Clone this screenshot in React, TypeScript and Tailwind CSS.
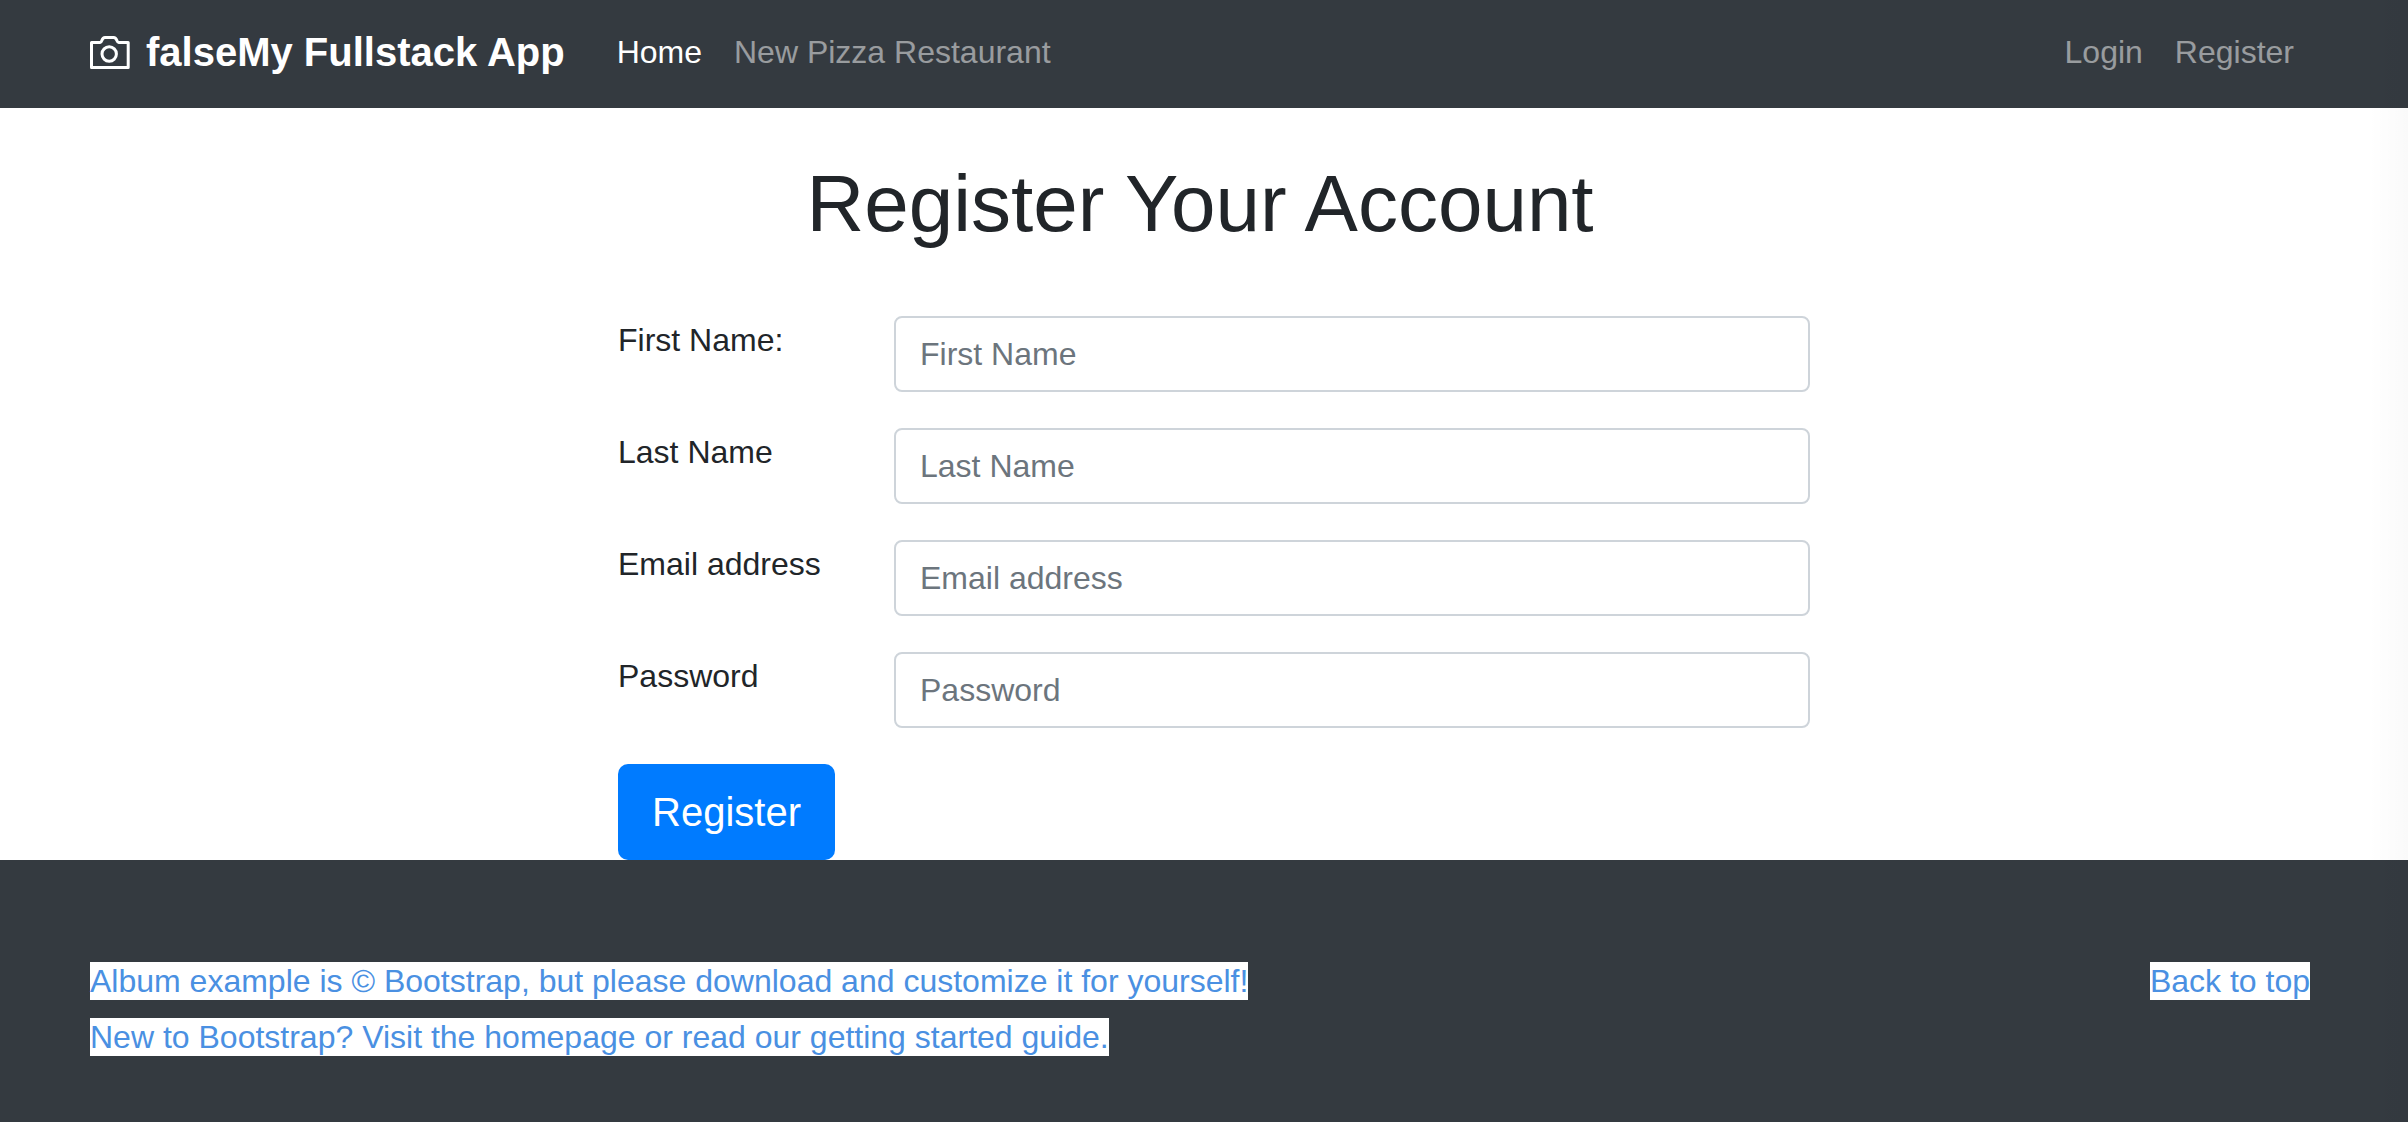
const fields = [
  { id: "firstName", label: "First Name:", placeholder: "First Name", type: "text" },
  { id: "lastName", label: "Last Name", placeholder: "Last Name", type: "text" },
  { id: "email", label: "Email address", placeholder: "Email address", type: "email" },
  { id: "password", label: "Password", placeholder: "Password", type: "password" },
];

function CameraIcon() {
  return (
    <svg
      className="size-10 shrink-0"
      viewBox="0 0 40 40"
      fill="none"
      stroke="currentColor"
      strokeWidth="3"
      aria-hidden="true"
    >
      <path d="M1.5 10.5H10.2C12.4 10.5 11.2 5.6 15 5.6H23.6C27.4 5.6 26.4 10.5 28.6 10.5H38.2V35.4H1.5Z" strokeLinejoin="round" />
      <circle cx="19.2" cy="22" r="7.2" />
    </svg>
  );
}

function Header() {
  return (
    <header className="bg-[#343a40] pr-2">
      <nav className="mx-auto flex h-[108px] max-w-[2220px] items-center pb-1">
        <a href="#" className="flex items-center gap-4 text-[40px] leading-[60px] font-bold text-white">
          <CameraIcon />
          falseMy Fullstack App
        </a>
        <a href="#" className="ml-[52px] text-white">Home</a>
        <a href="#" className="ml-8 text-white/50">New Pizza Restaurant</a>
        <div className="ml-auto flex gap-8 pr-4 text-white/50">
          <a href="#">Login</a>
          <a href="#">Register</a>
        </div>
      </nav>
    </header>
  );
}

function RegisterForm() {
  return (
    <main className="bg-white pt-12 pr-2">
      <h1 className="text-center text-[80px] leading-[96px] text-[#212529]">Register Your Account</h1>
      <div className="pt-16 pl-7">
        <form className="mx-auto max-w-[1192px]">
          {fields.map((f) => (
            <div key={f.id} className="mb-9 grid grid-cols-[276px_minmax(0,1fr)] items-start">
              <label htmlFor={f.id} className="leading-[48px] text-[#212529]">{f.label}</label>
              <input
                id={f.id}
                type={f.type}
                placeholder={f.placeholder}
                className="h-[76px] w-full rounded-lg border-2 border-[#ced4da] bg-white px-6 text-[#495057] placeholder:text-[#6c757d]"
              />
            </div>
          ))}
          <button type="submit" className="block h-24 rounded-[10px] bg-[#007bff] px-[34px] text-[40px] text-white">
            Register
          </button>
        </form>
      </div>
    </main>
  );
}

function Footer() {
  return (
    <footer className="grow bg-[#343a40] pt-[93px] pr-2 leading-[56px]">
      <div className="mx-auto flex max-w-[2220px] items-start justify-between">
        <div>
          <p><a href="#" className="bg-white py-px text-[#4a90e2]">Album example is © Bootstrap, but please download and customize it for yourself!</a></p>
          <p><a href="#" className="bg-white py-px text-[#4a90e2]">New to Bootstrap? Visit the homepage or read our getting started guide.</a></p>
        </div>
        <p><a href="#" className="bg-white py-px text-[#4a90e2]">Back to top</a></p>
      </div>
    </footer>
  );
}

export default function App() {
  return (
    <div className="relative flex min-h-screen flex-col font-['Liberation_Sans',Arial,sans-serif] text-[32px] leading-[48px]">
      <Header />
      <RegisterForm />
      <Footer />
      <div className="pointer-events-none absolute inset-y-0 right-0 w-10 bg-linear-to-r from-transparent to-black/2" />
    </div>
  );
}
